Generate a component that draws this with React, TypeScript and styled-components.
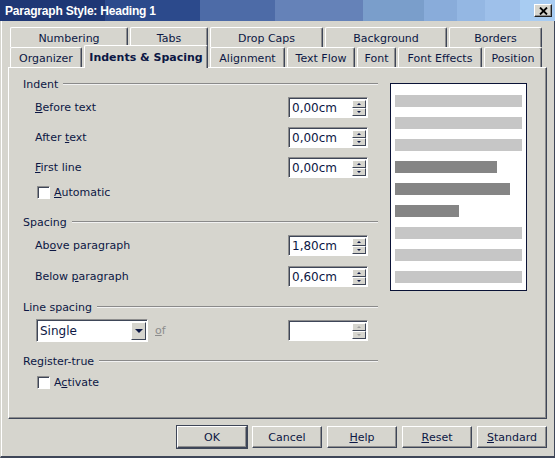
import React from 'react';
import styled, { createGlobalStyle, css } from 'styled-components';

const face = '#d6d5ce';
const ink = '#0c1744';
const dark = '#3e4658';
const mid = '#8e8e8e';

const GlobalStyle = createGlobalStyle`
  html, body {
    margin: 0;
    padding: 0;
    background: ${face};
  }
  body {
    font-family: 'DejaVu Sans', 'Noto Sans', sans-serif;
    font-size: 11px;
    color: ${ink};
  }
`;

const Window = styled.div`
  width: 555px;
  height: 458px;
  display: flex;
  flex-direction: column;
  background: ${face};
`;

const TitleBar = styled.div`
  height: 21px;
  flex: none;
  display: flex;
  align-items: center;
  justify-content: space-between;
  padding: 0 3px 0 5px;
  background: linear-gradient(
    to right,
    #1e3775 0px, #1e3775 105px,
    #2c4a8c 105px, #2c4a8c 200px,
    #4d6ba7 200px, #4d6ba7 275px,
    #6582b8 275px, #6582b8 363px,
    #7a9ecb 363px, #7a9ecb 424px,
    #89acda 424px, #89acda 457px,
    #94b7e3 457px, #94b7e3 485px,
    #9ec0ea 485px, #9ec0ea 520px,
    #a8ccf2 520px
  );
`;

const Title = styled.span`
  font-family: 'Liberation Sans', Arial, sans-serif;
  font-weight: bold;
  font-size: 12px;
  letter-spacing: -0.2px;
  color: #fff;
`;

const CloseButton = styled.div`
  width: 18px;
  height: 13px;
  box-sizing: border-box;
  background: ${face};
  border-top: 1px solid #fff;
  border-left: 1px solid #fff;
  border-right: 1px solid #202020;
  border-bottom: 1px solid #202020;
  box-shadow: inset -1px -1px 0 ${mid};
  display: flex;
  align-items: center;
  justify-content: center;
`;

const Frame = styled.div`
  flex: 1;
  display: flex;
  flex-direction: column;
  padding: 6px 7px 0 7px;
  border-left: 1px solid ${face};
  border-right: 1px solid ${dark};
  border-bottom: 2px solid ${dark};
  box-shadow: inset 1px 0 0 #fff;
`;

const TabRow = styled.div`
  display: flex;
  align-items: flex-start;
  height: 20px;
  padding-left: 2px;
`;

const Tab = styled.div<{ $w: number; $active?: boolean }>`
  box-sizing: border-box;
  width: ${p => p.$w - 2}px;
  height: 20px;
  margin-right: 2px;
  padding-top: 1px;
  background: ${face};
  border-top: 1px solid #fff;
  border-left: 1px solid #fff;
  border-right: 1px solid ${dark};
  box-shadow: inset -1px 0 0 ${mid};
  border-radius: 2px 2px 0 0;
  display: flex;
  align-items: center;
  justify-content: center;
  white-space: nowrap;
  ${p =>
    p.$active &&
    css`
      height: 23px;
      margin-top: -2px;
      padding-top: 1px;
      font-weight: bold;
      position: relative;
      z-index: 1;
    `}
`;

const Panel = styled.div`
  box-sizing: border-box;
  height: 352px;
  flex: none;
  display: grid;
  grid-template-columns: 355px 137px;
  column-gap: 12px;
  align-items: start;
  padding: 9px 0 0 14px;
  border-top: 1px solid #fff;
  border-left: 1px solid #fff;
  border-right: 1px solid ${dark};
  border-bottom: 1px solid ${dark};
  box-shadow: inset -1px -1px 0 ${mid};
`;

const Column = styled.div`
  display: flex;
  flex-direction: column;
`;

const GroupTitle = styled.div<{ $top: number }>`
  display: flex;
  align-items: center;
  gap: 5px;
  height: 14px;
  margin-top: ${p => p.$top}px;
  &::after {
    content: '';
    flex: 1;
    border-top: 1px solid #8a8a8a;
    border-bottom: 1px solid #f2f2f2;
  }
`;

const FieldRow = styled.div<{ $top: number; $h?: number; $left?: number }>`
  display: flex;
  align-items: center;
  height: ${p => p.$h ?? 21}px;
  margin-top: ${p => p.$top}px;
  padding: 0 10px 0 ${p => p.$left ?? 12}px;
`;

const Label = styled.span<{ $disabled?: boolean }>`
  flex: 1;
  color: ${p => (p.$disabled ? '#8c8c8c' : ink)};
`;

const Key = styled.span`
  text-decoration: underline;
  text-underline-offset: 1px;
`;

const Sunken = styled.div<{ $w: number; $h: number }>`
  box-sizing: border-box;
  width: ${p => p.$w}px;
  height: ${p => p.$h}px;
  flex: none;
  display: flex;
  align-items: stretch;
  background: #fff;
  border-top: 1px solid ${mid};
  border-left: 1px solid ${mid};
  border-right: 1px solid #fff;
  border-bottom: 1px solid #fff;
  box-shadow: inset 1px 1px 0 ${dark};
`;

const FieldText = styled.span`
  flex: 1;
  display: flex;
  align-items: center;
  padding-left: 3px;
  font-size: 12px;
`;

const SpinButtons = styled.div`
  width: 14px;
  display: flex;
  flex-direction: column;
  margin: 2px 1px 1px 0;
`;

const Bevel = styled.div`
  flex: 1;
  box-sizing: border-box;
  background: ${face};
  border-top: 1px solid #fff;
  border-left: 1px solid #fff;
  border-right: 1px solid ${dark};
  border-bottom: 1px solid ${dark};
  display: flex;
  align-items: center;
  justify-content: center;
`;

const Arrow = styled.span<{ $down?: boolean; $disabled?: boolean; $size?: number }>`
  width: 0;
  height: 0;
  border-left: ${p => p.$size ?? 2}px solid transparent;
  border-right: ${p => p.$size ?? 2}px solid transparent;
  ${p =>
    p.$down
      ? css`border-top: ${p.$size ?? 2}px solid ${p.$disabled ? '#a0a0a0' : ink};`
      : css`border-bottom: ${p.$size ?? 2}px solid ${p.$disabled ? '#a0a0a0' : ink};`}
`;

const DropButton = styled(Bevel)`
  flex: none;
  width: 15px;
  margin: 2px 1px 1px 0;
`;

const OfLabel = styled.span`
  margin-left: 7px;
  color: #8c8c8c;
  flex: 1;
`;

const CheckBox = styled.span`
  box-sizing: border-box;
  width: 13px;
  height: 13px;
  margin-right: 4px;
  background: #fff;
  border-top: 1px solid ${mid};
  border-left: 1px solid ${mid};
  border-right: 1px solid #fff;
  border-bottom: 1px solid #fff;
  box-shadow: inset 1px 1px 0 ${dark};
`;

const Preview = styled.div`
  margin-top: 6px;
  height: 208px;
  box-sizing: border-box;
  background: #fff;
  border: 1px solid #0a1236;
  padding: 11px 4px 0 4px;
  display: flex;
  flex-direction: column;
  gap: 10px;
`;

const Bar = styled.div<{ $heading?: boolean }>`
  height: 12px;
  background: ${p => (p.$heading ? '#858585' : '#c6c6c6')};
`;

const ButtonBar = styled.div`
  display: flex;
  justify-content: flex-end;
  gap: 5px;
  margin-top: 7px;
`;

const Button = styled.div<{ $default?: boolean }>`
  box-sizing: border-box;
  width: 70px;
  height: 22px;
  display: flex;
  align-items: center;
  justify-content: center;
  background: ${face};
  border-top: 1px solid #fff;
  border-left: 1px solid #fff;
  border-right: 1px solid ${dark};
  border-bottom: 1px solid ${dark};
  box-shadow: inset -1px -1px 0 ${mid};
  ${p =>
    p.$default &&
    css`
      outline: 1px solid ${dark};
      outline-offset: 0;
    `}
`;

const rowOne = [
  { label: 'Numbering', w: 120 },
  { label: 'Tabs', w: 80 },
  { label: 'Drop Caps', w: 115 },
  { label: 'Background', w: 124 },
  { label: 'Borders', w: 95 },
];

const rowTwo = [
  { label: 'Organizer', w: 74 },
  { label: 'Indents & Spacing', w: 126, active: true },
  { label: 'Alignment', w: 77 },
  { label: 'Text Flow', w: 70 },
  { label: 'Font', w: 41 },
  { label: 'Font Effects', w: 86 },
  { label: 'Position', w: 60 },
];

const previewBars: { width?: number; heading?: boolean }[] = [
  {},
  {},
  {},
  { width: 102, heading: true },
  { width: 115, heading: true },
  { width: 64, heading: true },
  {},
  {},
  {},
];

const SpinField = ({ value, disabled }: { value?: string; disabled?: boolean }) => (
  <Sunken $w={80} $h={21}>
    <FieldText>{value}</FieldText>
    <SpinButtons>
      <Bevel>
        <Arrow $disabled={disabled} />
      </Bevel>
      <Bevel>
        <Arrow $down $disabled={disabled} />
      </Bevel>
    </SpinButtons>
  </Sunken>
);

const App = () => {
  return (
    <>
      <GlobalStyle />
      <Window>
        <TitleBar>
          <Title>Paragraph Style: Heading 1</Title>
          <CloseButton>
            <svg width="9" height="8" viewBox="0 0 9 8">
              <path d="M1 0.5 L8 7.5 M8 0.5 L1 7.5" stroke="#000" strokeWidth="1.8" />
            </svg>
          </CloseButton>
        </TitleBar>
        <Frame>
          <TabRow>
            {rowOne.map(t => (
              <Tab key={t.label} $w={t.w}>
                {t.label}
              </Tab>
            ))}
          </TabRow>
          <TabRow>
            {rowTwo.map(t => (
              <Tab key={t.label} $w={t.w} $active={t.active}>
                {t.label}
              </Tab>
            ))}
          </TabRow>
          <Panel>
            <Column>
              <GroupTitle $top={0}>Indent</GroupTitle>
              <FieldRow $top={6}>
                <Label>
                  <Key>B</Key>efore text
                </Label>
                <SpinField value="0,00cm" />
              </FieldRow>
              <FieldRow $top={9}>
                <Label>
                  After <Key>t</Key>ext
                </Label>
                <SpinField value="0,00cm" />
              </FieldRow>
              <FieldRow $top={9}>
                <Label>
                  <Key>F</Key>irst line
                </Label>
                <SpinField value="0,00cm" />
              </FieldRow>
              <FieldRow $top={7} $h={14} $left={14}>
                <CheckBox />
                <Label>
                  <Key>A</Key>utomatic
                </Label>
              </FieldRow>

              <GroupTitle $top={16}>Spacing</GroupTitle>
              <FieldRow $top={6}>
                <Label>
                  Ab<Key>o</Key>ve paragraph
                </Label>
                <SpinField value="1,80cm" />
              </FieldRow>
              <FieldRow $top={10}>
                <Label>
                  Below <Key>p</Key>aragraph
                </Label>
                <SpinField value="0,60cm" />
              </FieldRow>

              <GroupTitle $top={13}>Line spacing</GroupTitle>
              <FieldRow $top={5} $h={23} $left={13}>
                <Sunken $w={112} $h={23}>
                  <FieldText>Single</FieldText>
                  <DropButton>
                    <Arrow $down $size={4} />
                  </DropButton>
                </Sunken>
                <OfLabel>
                  <Key>o</Key>f
                </OfLabel>
                <SpinField disabled />
              </FieldRow>

              <GroupTitle $top={12}>Register-true</GroupTitle>
              <FieldRow $top={7} $h={14} $left={14}>
                <CheckBox />
                <Label>
                  A<Key>c</Key>tivate
                </Label>
              </FieldRow>
            </Column>

            <Preview>
              {previewBars.map((b, i) => (
                <Bar key={i} $heading={b.heading} style={b.width ? { width: b.width } : undefined} />
              ))}
            </Preview>
          </Panel>

          <ButtonBar>
            <Button $default>OK</Button>
            <Button>Cancel</Button>
            <Button>
              <Key>H</Key>elp
            </Button>
            <Button>
              <Key>R</Key>eset
            </Button>
            <Button>
              <Key>S</Key>tandard
            </Button>
          </ButtonBar>
        </Frame>
      </Window>
    </>
  );
};

export default App;
